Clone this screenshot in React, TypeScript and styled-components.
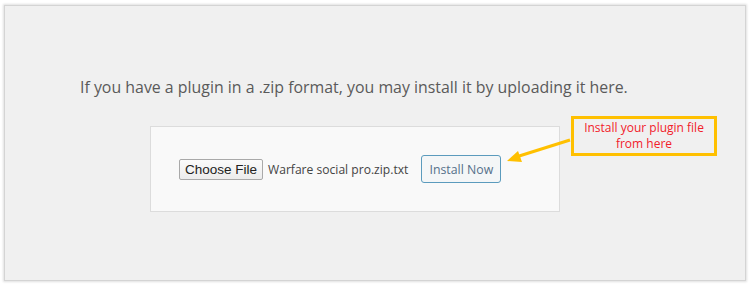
import React from "react";
import styled, { createGlobalStyle } from "styled-components";

const Global = createGlobalStyle`
  html, body { margin: 0; padding: 0; background: #ffffff; }
  body { width: 750px; height: 285px; overflow: hidden; }
`;

const Frame = styled.div`
  position: relative;
  box-sizing: border-box;
  margin: 5px 4px 0 4px;
  width: 742px;
  height: 276px;
  background: #f0f0f0;
  border: 1px solid #d4d4d4;
  box-shadow: 0 0 2px 1px rgba(0,0,0,0.12);
  display: flex;
  flex-direction: column;
  align-items: flex-start;
  padding: 71px 0 0 75px;
  font-family: "Open Sans", "Liberation Sans", sans-serif;
`;

const Intro = styled.p`
  margin: 0;
  font-size: 15.9px;
  color: #5a5a5a;
  line-height: 20px;
`;

const Card = styled.div`
  box-sizing: border-box;
  margin: 29px 0 0 70px;
  width: 410px;
  height: 86px;
  background: #f9f9f9;
  border: 1px solid #dcdcdc;
  display: flex;
  align-items: center;
  padding: 0 0 0 28px;
`;

const ChooseButton = styled.button`
  box-sizing: border-box;
  height: 21px;
  width: 84px;
  padding: 0;
  background: linear-gradient(#fbfbfb, #ececec);
  border: 1px solid #a9a9a9;
  border-radius: 2px;
  font-family: "Liberation Sans", Arial, sans-serif;
  font-size: 13.5px;
  color: #222;
`;

const FileName = styled.span`
  margin-left: 5px;
  font-size: 12.1px;
  color: #444;
`;

const InstallButton = styled.button`
  box-sizing: border-box;
  margin-left: 13px;
  height: 28px;
  width: 80px;
  padding: 0;
  background: #f4f6f7;
  border: 1px solid #5b9bbd;
  border-radius: 3px;
  font-family: "Open Sans", "Liberation Sans", sans-serif;
  font-size: 12.3px;
  color: #55708a;
`;

const Callout = styled.div`
  position: absolute;
  left: 566px;
  top: 110px;
  box-sizing: border-box;
  width: 146px;
  height: 40px;
  border: 3px solid #ffc000;
  display: flex;
  align-items: center;
  justify-content: center;
  text-align: center;
  font-family: "Open Sans", "Liberation Sans", sans-serif;
  font-size: 12px;
  line-height: 16px;
  color: #f2202a;
`;

const Arrow = styled.svg`
  position: absolute;
  left: 493px;
  top: 128px;
`;

export default function App() {
  return (
    <>
      <Global />
      <Frame>
        <Intro>If you have a plugin in a .zip format, you may install it by uploading it here.</Intro>
        <Card>
          <ChooseButton>Choose File</ChooseButton>
          <FileName>Warfare social pro.zip.txt</FileName>
          <InstallButton>Install Now</InstallButton>
        </Card>
        <Arrow width="82" height="40" viewBox="0 0 82 40">
          <line x1="72" y1="6" x2="18" y2="23" stroke="#ffc000" strokeWidth="3" />
          <polygon points="9,27 20,17 24,28" fill="#ffc000" />
        </Arrow>
        <Callout>Install your plugin file<br />from here</Callout>
      </Frame>
    </>
  );
}
